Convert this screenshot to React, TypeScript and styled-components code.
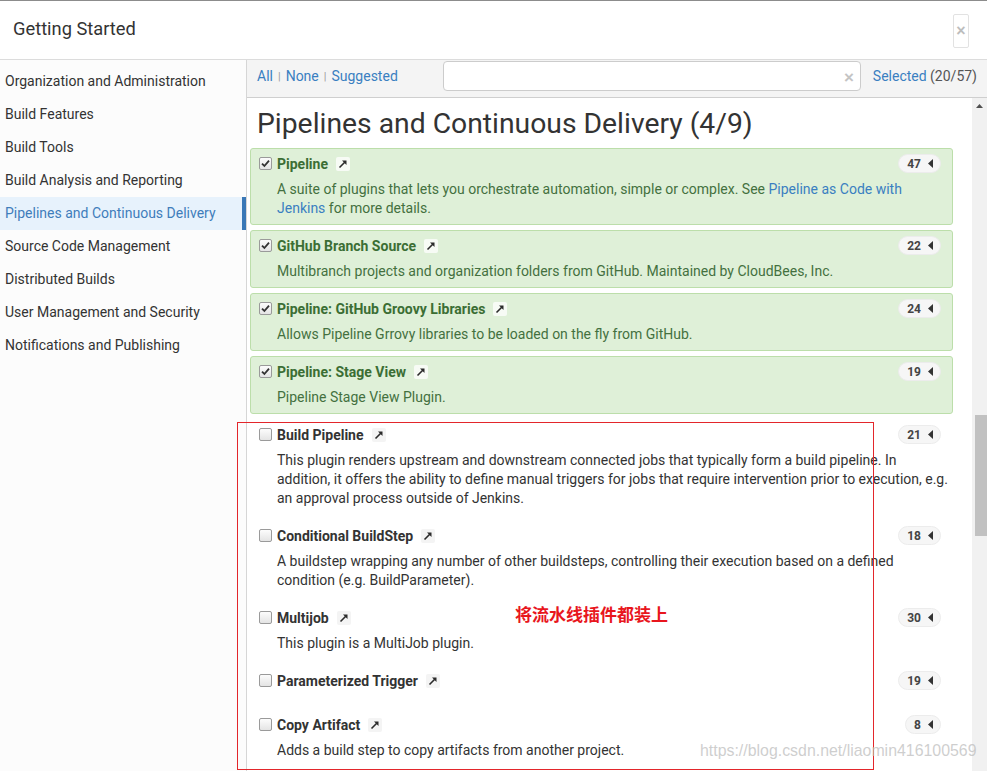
import React from 'react';
import styled, { createGlobalStyle } from 'styled-components';

const Global = createGlobalStyle`
  html, body { margin: 0; padding: 0; background: #fff; }
  body { font-family: Roboto, "Noto Sans", Arial, sans-serif; color: #333; }
  * { box-sizing: border-box; }
`;

const Page = styled.div`
  position: relative;
  width: 987px;
  height: 771px;
  overflow: hidden;
  display: flex;
  flex-direction: column;
  border-top: 1px solid #8c8c8c;
  background: #fff;
`;

const Header = styled.header`
  flex: none;
  height: 59px;
  display: flex;
  align-items: center;
  justify-content: space-between;
  padding: 0 18px 0 13px;
  border-bottom: 1px solid #dcdcdc;
`;

const Title = styled.h1`
  margin: 0 0 4px 0;
  font-size: 18.3px;
  font-weight: 400;
  color: #333;
`;

const CloseButton = styled.button`
  width: 16px;
  height: 34px;
  margin-top: 2px;
  padding: 0;
  border: 1px solid #e2e2e2;
  border-radius: 2px;
  background: #fff;
  color: #bdbdbd;
  font: 700 16px/1 Arial, sans-serif;
  display: flex;
  align-items: center;
  justify-content: center;
`;

const Body = styled.div`
  flex: 1;
  display: flex;
  min-height: 0;
`;

const Sidebar = styled.nav`
  flex: none;
  width: 247px;
  padding-top: 5px;
  border-right: 1px solid #d6d6d6;
  background: #fcfcfc;
`;

const NavItem = styled.div<{ $active?: boolean }>`
  height: 33px;
  line-height: 33px;
  padding-left: 5px;
  font-size: 14px;
  color: ${(p) => (p.$active ? '#3f7dbb' : '#333')};
  background: ${(p) => (p.$active ? '#e7f2fc' : 'transparent')};
  border-right: 4px solid ${(p) => (p.$active ? '#3a78b6' : 'transparent')};
  white-space: nowrap;
`;

const Main = styled.div`
  flex: 1;
  display: flex;
  flex-direction: column;
  min-width: 0;
`;

const Toolbar = styled.div`
  flex: none;
  height: 38px;
  display: flex;
  align-items: center;
  padding: 0 10px;
  background: #f4f4f4;
  border-bottom: 1px solid #cfcfcf;
`;

const FilterLinks = styled.div`
  width: 186px;
  display: flex;
  align-items: center;
  gap: 5px;
  font-size: 14px;
  margin-top: -5px;
`;

const Link = styled.a`
  color: #3a7fc1;
  text-decoration: none;
`;

const Sep = styled.span`
  color: #9a9a9a;
  font-size: 11px;
`;

const SearchBox = styled.div`
  width: 418px;
  height: 30px;
  margin-top: -5px;
  display: flex;
  align-items: center;
  justify-content: flex-end;
  padding-right: 6px;
  background: #fff;
  border: 1px solid #cccccc;
  border-radius: 4px;
`;

const ClearX = styled.span`
  color: #c4c4c4;
  font: 700 17px/1 Arial, sans-serif;
  margin-top: 3px;
`;

const Selected = styled.div`
  margin-left: auto;
  margin-top: -5px;
  font-size: 14px;
  color: #555;
`;

const Content = styled.div`
  flex: 1;
  display: flex;
  min-height: 0;
`;

const ScrollArea = styled.div`
  flex: 1;
  padding: 10px 19px 0 3px;
  overflow: hidden;
`;

const Heading = styled.h2`
  margin: 0 0 8px 7px;
  font-size: 28.3px;
  line-height: 32px;
  font-weight: 400;
  color: #333;
  white-space: nowrap;
`;

const List = styled.div`
  display: flex;
  flex-direction: column;
  gap: 5px;
`;

const Card = styled.div<{ $selected?: boolean }>`
  display: grid;
  grid-template-columns: 18px 1fr auto;
  padding: 6px 2px 6px 8px;
  border: 1px solid ${(p) => (p.$selected ? '#bcdeaa' : 'transparent')};
  border-radius: 3px;
  background: ${(p) => (p.$selected ? '#dff0d8' : 'transparent')};
  color: ${(p) => (p.$selected ? '#44703f' : '#333')};
`;

const Check = styled.span<{ $checked?: boolean }>`
  width: 13px;
  height: 13px;
  margin-top: 2px;
  border: 1px solid #9a9a9a;
  border-radius: 2px;
  background: linear-gradient(#fcfcfc, #e4e4e4);
  display: flex;
  align-items: center;
  justify-content: center;
`;

const TitleRow = styled.div`
  display: flex;
  align-items: center;
  gap: 8px;
  height: 18px;
`;

const PluginName = styled.span<{ $selected?: boolean }>`
  font-size: 14px;
  font-weight: 700;
  line-height: 18px;
  color: ${(p) => (p.$selected ? '#3b6e34' : '#333')};
`;

const ExtLink = styled.span<{ $selected?: boolean }>`
  width: 14px;
  height: 14px;
  border-radius: 2px;
  background: ${(p) => (p.$selected ? 'rgba(255,255,255,0.75)' : '#f4f4f4')};
  display: flex;
  align-items: center;
  justify-content: center;
`;

const Badge = styled.span`
  height: 19px;
  margin-right: 9px;
  margin-top: -1px;
  padding: 0 7px 0 8px;
  display: flex;
  align-items: center;
  gap: 7px;
  border-radius: 10px;
  background: #f6f6f6;
  border: 1px solid #ececec;
  font-size: 12px;
  font-weight: 700;
  color: #444;
`;

const Desc = styled.div`
  grid-column: 2 / 4;
  margin-top: 7px;
  font-size: 14px;
  line-height: 19px;
`;

const Scrollbar = styled.div`
  flex: none;
  width: 15px;
  background: #f1f1f1;
  display: flex;
  flex-direction: column;
  align-items: center;
`;

const ScrollArrow = styled.div`
  height: 15px;
  width: 15px;
  display: flex;
  align-items: center;
  justify-content: center;
`;

const Thumb = styled.div`
  width: 12px;
  margin-left: 2px;
  background: #c1c1c1;
`;

const Annotation = styled.div`
  position: absolute;
  left: 237px;
  top: 421px;
  width: 637px;
  height: 348px;
  border: 1px solid #e3262b;
  pointer-events: none;
`;

const AnnotationText = styled.div`
  position: absolute;
  left: 515px;
  top: 601px;
  font-family: "Noto Sans CJK SC", sans-serif;
  font-weight: 700;
  font-size: 17px;
  line-height: 24px;
  color: #e8161d;
`;

const Watermark = styled.div`
  position: absolute;
  left: 700px;
  top: 741px;
  font-family: "Liberation Sans", Arial, sans-serif;
  font-size: 15.9px;
  color: rgba(190, 190, 190, 0.75);
  white-space: nowrap;
`;

const CheckMark = () => (
  <svg width="9" height="9" viewBox="0 0 9 9">
    <path d="M1 4.6 L3.4 7 L8 1.6" fill="none" stroke="#333" strokeWidth="1.8" />
  </svg>
);

const ArrowIcon = () => (
  <svg width="10" height="10" viewBox="0 0 10 10">
    <path d="M1.5 8.5 L7 3" stroke="#2b2b2b" strokeWidth="1.6" />
    <path d="M4 1.5 L8.5 1.5 L8.5 6 Z" fill="#2b2b2b" />
  </svg>
);

const Caret = () => (
  <svg width="5" height="9" viewBox="0 0 5 9">
    <path d="M5 0 L0 4.5 L5 9 Z" fill="#333" />
  </svg>
);

type Plugin = {
  name: string;
  count: number;
  selected: boolean;
  desc: React.ReactNode;
};

const plugins: Plugin[] = [
  {
    name: 'Pipeline',
    count: 47,
    selected: true,
    desc: (
      <>
        A suite of plugins that lets you orchestrate automation, simple or complex. See{' '}
        <Link>Pipeline as Code with Jenkins</Link> for more details.
      </>
    ),
  },
  {
    name: 'GitHub Branch Source',
    count: 22,
    selected: true,
    desc: 'Multibranch projects and organization folders from GitHub. Maintained by CloudBees, Inc.',
  },
  {
    name: 'Pipeline: GitHub Groovy Libraries',
    count: 24,
    selected: true,
    desc: 'Allows Pipeline Grrovy libraries to be loaded on the fly from GitHub.',
  },
  { name: 'Pipeline: Stage View', count: 19, selected: true, desc: 'Pipeline Stage View Plugin.' },
  {
    name: 'Build Pipeline',
    count: 21,
    selected: false,
    desc: 'This plugin renders upstream and downstream connected jobs that typically form a build pipeline. In addition, it offers the ability to define manual triggers for jobs that require intervention prior to execution, e.g. an approval process outside of Jenkins.',
  },
  {
    name: 'Conditional BuildStep',
    count: 18,
    selected: false,
    desc: 'A buildstep wrapping any number of other buildsteps, controlling their execution based on a defined condition (e.g. BuildParameter).',
  },
  { name: 'Multijob', count: 30, selected: false, desc: 'This plugin is a MultiJob plugin.' },
  { name: 'Parameterized Trigger', count: 19, selected: false, desc: '' },
  {
    name: 'Copy Artifact',
    count: 8,
    selected: false,
    desc: 'Adds a build step to copy artifacts from another project.',
  },
];

const categories = [
  'Organization and Administration',
  'Build Features',
  'Build Tools',
  'Build Analysis and Reporting',
  'Pipelines and Continuous Delivery',
  'Source Code Management',
  'Distributed Builds',
  'User Management and Security',
  'Notifications and Publishing',
];

export default function App() {
  return (
    <>
      <Global />
      <Page>
        <Header>
          <Title>Getting Started</Title>
          <CloseButton>×</CloseButton>
        </Header>
        <Body>
          <Sidebar>
            {categories.map((c) => (
              <NavItem key={c} $active={c === 'Pipelines and Continuous Delivery'}>
                {c}
              </NavItem>
            ))}
          </Sidebar>
          <Main>
            <Toolbar>
              <FilterLinks>
                <Link>All</Link>
                <Sep>|</Sep>
                <Link>None</Link>
                <Sep>|</Sep>
                <Link>Suggested</Link>
              </FilterLinks>
              <SearchBox>
                <ClearX>×</ClearX>
              </SearchBox>
              <Selected>
                <Link>Selected</Link> (20/57)
              </Selected>
            </Toolbar>
            <Content>
              <ScrollArea>
                <Heading>Pipelines and Continuous Delivery (4/9)</Heading>
                <List>
                  {plugins.map((p) => (
                    <Card key={p.name} $selected={p.selected}>
                      <Check $checked={p.selected}>{p.selected && <CheckMark />}</Check>
                      <TitleRow>
                        <PluginName $selected={p.selected}>{p.name}</PluginName>
                        <ExtLink $selected={p.selected}>
                          <ArrowIcon />
                        </ExtLink>
                      </TitleRow>
                      <Badge>
                        {p.count}
                        <Caret />
                      </Badge>
                      <Desc>{p.desc}</Desc>
                    </Card>
                  ))}
                </List>
              </ScrollArea>
              <Scrollbar>
                <ScrollArrow>
                  <svg width="7" height="4" viewBox="0 0 7 4">
                    <path d="M0 4 L3.5 0 L7 4 Z" fill="#505050" />
                  </svg>
                </ScrollArrow>
                <Thumb style={{ marginTop: 302, height: 121 }} />
              </Scrollbar>
            </Content>
          </Main>
        </Body>
        <Annotation />
        <AnnotationText>将流水线插件都装上</AnnotationText>
        <Watermark>https://blog.csdn.net/liaomin416100569</Watermark>
      </Page>
    </>
  );
}
